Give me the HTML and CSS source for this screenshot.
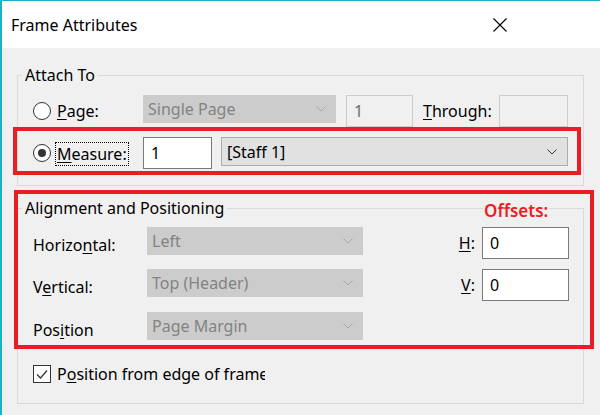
FILE: index.html
```html
<!DOCTYPE html>
<html>
<head>
<meta charset="utf-8">
<link rel="stylesheet" href="styles.css">
</head>
<body>
<div class="window">
  <div class="titlebar">
    <span class="title">Frame Attributes</span>
    <svg class="close" width="14" height="14" viewBox="0 0 14 14"><path d="M0.5 0.5 L13.5 13.5 M13.5 0.5 L0.5 13.5" stroke="#000" stroke-width="1.1" fill="none"/></svg>
  </div>
  <div class="content">
    <div class="group group-attach">
      <span class="legend">Attach To</span>
      <div class="row row-page">
        <span class="radio"></span>
        <span class="label"><u>P</u>age:</span>
        <span class="combo disabled combo-page">Single Page<svg class="chev" width="10" height="6" viewBox="0 0 10 6"><path d="M0.5 0.5 L5 5 L9.5 0.5" stroke="#a8a8a8" fill="none"/></svg></span>
        <span class="box disabled box-one">1</span>
        <span class="label-through"><u>T</u>hrough:</span>
        <span class="box disabled box-through"></span>
      </div>
      <div class="row row-measure">
        <span class="radio checked"></span>
        <span class="label"><span class="focus"><u>M</u>easure:</span></span>
        <span class="box edit box-measure">1</span>
        <span class="combo combo-staff">[Staff 1]<svg class="chev" width="10" height="6" viewBox="0 0 10 6"><path d="M0.5 0.5 L5 5 L9.5 0.5" stroke="#333" fill="none"/></svg></span>
      </div>
    </div>
    <div class="group group-align">
      <span class="legend">Alignment and Positioning</span>
      <div class="row row-h">
        <span class="label-wide">Horizo<u>n</u>tal:</span>
        <span class="combo disabled combo-align">Left<svg class="chev" width="10" height="6" viewBox="0 0 10 6"><path d="M0.5 0.5 L5 5 L9.5 0.5" stroke="#a8a8a8" fill="none"/></svg></span>
        <span class="spacer"></span>
        <span class="label-off"><u>H</u>:</span>
        <span class="box edit box-off">0</span>
      </div>
      <div class="row row-v">
        <span class="label-wide">V<u>e</u>rtical:</span>
        <span class="combo disabled combo-align">Top (Header)<svg class="chev" width="10" height="6" viewBox="0 0 10 6"><path d="M0.5 0.5 L5 5 L9.5 0.5" stroke="#a8a8a8" fill="none"/></svg></span>
        <span class="spacer"></span>
        <span class="label-off"><u>V</u>:</span>
        <span class="box edit box-off">0</span>
      </div>
      <div class="row row-p">
        <span class="label-wide">Pos<u>i</u>tion</span>
        <span class="combo disabled combo-align">Page Margin<svg class="chev" width="10" height="6" viewBox="0 0 10 6"><path d="M0.5 0.5 L5 5 L9.5 0.5" stroke="#a8a8a8" fill="none"/></svg></span>
      </div>
      <div class="row row-check">
        <span class="checkbox"><svg width="16" height="16" viewBox="0 0 16 16"><path d="M3 8.5 L6.5 12 L13 4.5" stroke="#333" stroke-width="1.2" fill="none"/></svg></span>
        <span class="check-label">P<u>o</u>sition from edge of frame</span>
      </div>
    </div>
  </div>
  <div class="mark mark-measure"></div>
  <div class="mark mark-align"></div>
  <div class="offsets">Offsets:</div>
</div>
</body>
</html>
```
FILE: styles.css
```css
* { box-sizing: border-box; }
html, body { margin: 0; padding: 0; }
body {
  width: 600px;
  height: 415px;
  overflow: hidden;
  background: #f0f0f0;
  font-family: "Noto Sans", "Open Sans", sans-serif;
  font-size: 16px;
  color: #000;
}
u { text-decoration: underline; text-underline-offset: 2px; text-decoration-thickness: 1px; }
.window {
  position: relative;
  width: 600px;
  height: 415px;
  border-top: 1px solid #1ab3c6;
  border-left: 2px solid #1ab3c6;
  background: #f0f0f0;
  overflow: hidden;
}
.titlebar {
  height: 47px;
  background: #fff;
  display: flex;
  align-items: center;
  padding-left: 9px;
}
.title { line-height: 20px; font-size: 16px; }
.close { margin-left: auto; margin-right: 93px; }
.content { padding-top: 27px; }
.group {
  border: 1px solid #dadada;
  margin-left: 15px;
  width: 567px;
}
.legend {
  display: block;
  width: max-content;
  margin: -11px 0 0 -11px;
  padding: 0 3px;
  line-height: 20px;
  background: #f0f0f0;
}
.group-attach { height: 111px; padding: 0 14px 0 15px; }
.row { display: flex; align-items: center; }
.row-page { margin-top: 10px; height: 32px; align-items: flex-start; }
.row-measure { margin-top: 10px; height: 32px; align-items: flex-start; }
.radio {
  width: 18px; height: 18px;
  border: 1px solid #333;
  border-radius: 50%;
  background: #fff;
  margin-top: 7px;
  display: flex; align-items: center; justify-content: center;
  flex: none;
}
.radio.checked::after {
  content: "";
  width: 8px; height: 8px;
  border-radius: 50%;
  background: #333;
}
.label { width: 86px; margin-left: 6px; line-height: 22px; margin-top: 5px; flex: none; }
.focus {
  display: inline-block;
  border: 1px dotted #000;
  padding: 0 1px;
  margin-left: -2px;
  line-height: 22px;
}
.combo {
  position: relative;
  display: flex;
  align-items: center;
  padding-left: 5px;
  flex: none;
}
.combo .chev { position: absolute; right: 10px; top: 50%; margin-top: -3px; }
.combo.disabled { background: #cccccc; color: #838383; }
.combo-page { width: 193px; height: 28px; }
.box {
  display: flex; align-items: center;
  padding-left: 7px;
  height: 32px;
  flex: none;
}
.box.disabled { border: 1px solid #cccccc; color: #6d6d6d; }
.box-one { width: 67px; margin-left: 10px; }
.label-through { margin-left: 10px; width: 76px; line-height: 32px; }
.box-through { width: 69px; }
.box.edit { background: #fff; border: 1px solid #7a7a7a; }
.box-measure { width: 69px; }
.combo-staff {
  width: 347px; height: 29px;
  margin-left: 9px;
  background: #e1e1e1;
  border: 1px solid #adadad;
}
.group-align {
  margin-top: 22px;
  height: 196px;
  padding: 0 14px 0 15px;
}
.row-h { margin-top: 9px; height: 32px; align-items: flex-start; }
.row-v { margin-top: 10px; height: 32px; align-items: flex-start; }
.row-p { margin-top: 11px; height: 28px; align-items: flex-start; }
.label-wide { width: 114px; line-height: 28px; flex: none; margin-top: 4px; }
.combo-align { width: 216px; height: 28px; }
.spacer { flex: 1; }
.label-off { line-height: 32px; margin-right: 7px; }
.box-off { width: 87px; }
.row-check { margin-top: 22px; height: 24px; }
.checkbox {
  width: 18px; height: 18px;
  border: 1px solid #333;
  background: #fff;
  display: flex; align-items: center; justify-content: center;
  flex: none;
}
.check-label {
  margin-left: 6px;
  width: 208px;
  white-space: nowrap;
  overflow: hidden;
  line-height: 24px;
}
.mark {
  position: absolute;
  border: 4px solid #ec1c24;
}
.mark-measure { left: 11px; top: 126px; width: 568px; height: 48px; }
.mark-align { left: 12px; top: 189px; width: 580px; height: 159px; }
.offsets {
  position: absolute;
  left: 481px; top: 199px;
  color: #ec1c24;
  font-weight: 600;
  font-size: 17px;
  line-height: 22px;
  background: #f0f0f0;
  padding: 0 1px;
}
```
